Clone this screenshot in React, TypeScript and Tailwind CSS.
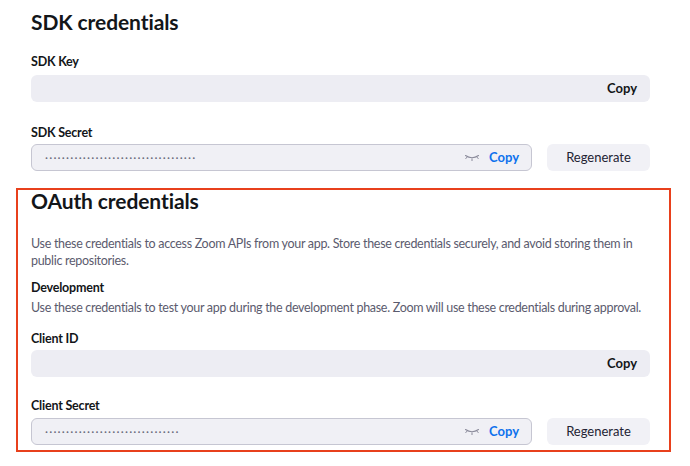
const font = { fontFamily: 'Lato, "Open Sans", sans-serif' }
const dotFont = { fontFamily: '"Open Sans", sans-serif' }

function EyeClosed() {
  return (
    <svg width="16" height="8" viewBox="0 0 16 8" fill="none" className="text-[#8a8a9a]">
      <path d="M1.5 1.5 Q8 6 14.5 1.5" stroke="currentColor" strokeWidth="1.1" strokeLinecap="round" />
      <path d="M3 3.2 L1.8 4.6 M8 4.9 L8 6.6 M13 3.2 L14.2 4.6" stroke="currentColor" strokeWidth="1" strokeLinecap="round" />
    </svg>
  )
}

function Label({ children, className = '' }: { children: React.ReactNode; className?: string }) {
  return (
    <div className={`text-[12.5px] font-bold leading-[16px] tracking-[-0.2px] text-[#131619] ${className}`}>
      {children}
    </div>
  )
}

function PlainField() {
  return (
    <div className="mt-[5px] flex h-[27px] items-center justify-end rounded-[6px] bg-[#ededf3] pr-[13px]">
      <span className="text-[13px] font-bold text-[#131619]">Copy</span>
    </div>
  )
}

function SecretField({ dots, top }: { dots: number; top: string }) {
  return (
    <div className={`flex gap-[15px] ${top}`}>
      <div className="flex h-[27px] flex-1 items-center rounded-[6px] border border-[#c6c6d2] bg-[#f0f0f5] pl-[13px] pr-[12px]">
        <span className="flex-1 text-[8px] leading-none tracking-[1.2px] text-[#6e6e7e]" style={dotFont}>
          {'•'.repeat(dots)}
        </span>
        <EyeClosed />
        <span className="ml-[9px] text-[13px] font-bold text-[#0e72ed]">Copy</span>
      </div>
      <div className="flex h-[27px] w-[103px] items-center justify-center rounded-[6px] bg-[#f1f1f6] text-[13px] text-[#232333]">
        Regenerate
      </div>
    </div>
  )
}

export default function App() {
  return (
    <div className="min-h-[466px] w-[690px] bg-white" style={font}>
      <div className="px-[31px] pt-[8px]">
        <h2 className="text-[21px] font-bold leading-[28px] tracking-[-0.1px] text-[#131619]">SDK credentials</h2>
        <div className="w-[619px]">
          <Label className="mt-[18px]">SDK Key</Label>
          <PlainField />
          <Label className="mt-[23px]">SDK Secret</Label>
          <SecretField dots={36} top="mt-[3px]" />
        </div>
      </div>
      <div className="ml-[16px] mt-[17px] w-[655px] border-2 border-[#e8401c] pb-[5px] pl-[13px]">
        <div className="w-[619px]">
          <h2 className="text-[21px] font-bold leading-[22px] tracking-[-0.1px] text-[#131619]">OAuth credentials</h2>
          <p className="mt-[23px] text-[12.5px] leading-[17px] tracking-[-0.3px] text-[#5b5b6e]">
            Use these credentials to access Zoom APIs from your app. Store these credentials securely, and avoid storing them in public repositories.
          </p>
          <Label className="mt-[11px]">Development</Label>
          <p className="mt-[3px] text-[12.5px] leading-[17px] tracking-[-0.3px] text-[#5b5b6e]">
            Use these credentials to test your app during the development phase. Zoom will use these credentials during approval.
          </p>
          <Label className="mt-[15px]">Client ID</Label>
          <div className="-mt-[2px]">
            <PlainField />
          </div>
          <Label className="mt-[21px]">Client Secret</Label>
          <SecretField dots={32} top="mt-[4px]" />
        </div>
      </div>
    </div>
  )
}
